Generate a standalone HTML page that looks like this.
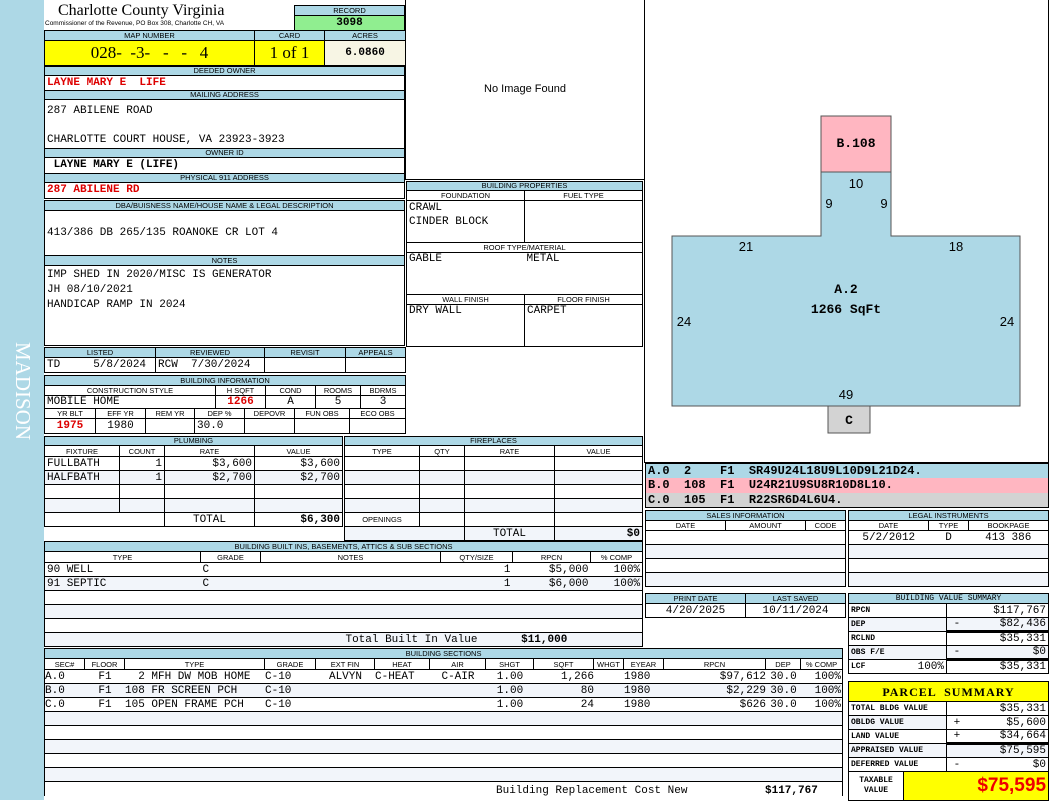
<!DOCTYPE html>
<html><head><meta charset="utf-8"><style>
*{margin:0;padding:0;box-sizing:border-box}
body{width:1050px;height:800px;position:relative;background:#fff;overflow:hidden;font-family:"Liberation Mono",monospace;font-size:11px;color:#000}
.a{position:absolute}
table{position:absolute;border-collapse:collapse;table-layout:fixed}
td{border:1px solid #000;padding:0 2px;white-space:nowrap;overflow:hidden;font-family:"Liberation Mono",monospace;font-size:11px;line-height:12px}
td.h{background:#add8e6;font-family:"Liberation Sans",sans-serif;font-size:7.5px;text-align:center;line-height:8px;padding:0}
td.s{font-family:"Liberation Sans",sans-serif;font-size:7.5px;text-align:center;line-height:9px;padding:0}
.r{text-align:right}.c{text-align:center}
.red{color:#d00;font-weight:bold}
.bold{font-weight:bold}
.alt td{background:#f2f5fa}
.sm td{font-size:8px;font-weight:bold;font-family:"Liberation Mono",monospace}
</style></head><body>
<div class="a" style="left:0;top:0;width:44px;height:800px;background:#add8e6"></div>
<div class="a" style="left:9px;top:342px;width:26px;height:120px;color:#fff;font-family:'Liberation Serif',serif;font-size:21px;writing-mode:vertical-rl;letter-spacing:0px">MADISON</div>

<div class="a" style="left:58px;top:2px;font-family:'Liberation Serif',serif;font-size:16px">Charlotte County Virginia</div>
<div class="a" style="left:45px;top:20px;font-family:'Liberation Sans',sans-serif;font-size:6.5px">Commissioner of the Revenue, PO Box 308, Charlotte CH, VA</div>

<table style="left:294px;top:5px;width:111px"><tr style="height:10px"><td class="h">RECORD</td></tr><tr style="height:15px"><td class="c bold" style="background:#90ee90">3098</td></tr></table>

<table style="left:44px;top:30px;width:361px"><col style="width:210px"><col style="width:70px"><col style="width:81px">
<tr style="height:10px"><td class="h">MAP NUMBER</td><td class="h">CARD</td><td class="h">ACRES</td></tr>
<tr style="height:25px"><td class="c" style="background:#ff0;font-family:'Liberation Serif',serif;font-size:17px;line-height:20px;white-space:pre">028-  -3-   -   -   4</td><td class="c" style="background:#ff0;font-family:'Liberation Serif',serif;font-size:17px;line-height:20px">1 of 1</td><td class="c bold" style="background:#f7f5e4">6.0860</td></tr></table>

<table style="left:44px;top:66px;width:361px">
<tr style="height:9px"><td class="h">DEEDED OWNER</td></tr>
<tr style="height:15px"><td class="red">LAYNE MARY E &nbsp;LIFE</td></tr>
<tr style="height:9px"><td class="h">MAILING ADDRESS</td></tr>
<tr style="height:46px"><td style="vertical-align:top;line-height:14.5px;padding-top:4px">287 ABILENE ROAD<br><br>CHARLOTTE COURT HOUSE, VA 23923-3923</td></tr>
<tr style="height:9px"><td class="h">OWNER ID</td></tr>
<tr style="height:16px"><td class="bold">&nbsp;LAYNE MARY E (LIFE)</td></tr>
<tr style="height:9px"><td class="h">PHYSICAL 911 ADDRESS</td></tr>
<tr style="height:16px"><td class="red">287 ABILENE RD</td></tr></table>

<table style="left:44px;top:200px;width:361px">
<tr style="height:10px"><td class="h">DBA/BUISNESS NAME/HOUSE NAME &amp; LEGAL DESCRIPTION</td></tr>
<tr style="height:45px"><td>413/386 DB 265/135 ROANOKE CR LOT 4</td></tr>
<tr style="height:10px"><td class="h">NOTES</td></tr>
<tr style="height:80px"><td style="vertical-align:top;line-height:15px;padding-top:2px">IMP SHED IN 2020/MISC IS GENERATOR<br>JH 08/10/2021<br>HANDICAP RAMP IN 2024</td></tr></table>

<table style="left:44px;top:347px;width:361px"><col style="width:111px"><col style="width:109px"><col style="width:81px"><col style="width:60px">
<tr style="height:10px"><td class="h">LISTED</td><td class="h">REVIEWED</td><td class="h">REVISIT</td><td class="h">APPEALS</td></tr>
<tr style="height:15px"><td>TD &nbsp; &nbsp; 5/8/2024</td><td>RCW &nbsp;7/30/2024</td><td></td><td></td></tr></table>

<table style="left:44px;top:375px;width:361px"><col style="width:51px"><col style="width:50px"><col style="width:49px"><col style="width:21px"><col style="width:29px"><col style="width:21px"><col style="width:29px"><col style="width:21px"><col style="width:34px"><col style="width:11px"><col style="width:45px">
<tr style="height:10px"><td class="h" colspan="11">BUILDING INFORMATION</td></tr>
<tr style="height:10px"><td class="s" colspan="4">CONSTRUCTION STYLE</td><td class="s" colspan="2">H SQFT</td><td class="s" colspan="2">COND</td><td class="s" colspan="2">ROOMS</td><td class="s">BDRMS</td></tr>
<tr style="height:13px"><td colspan="4">MOBILE HOME</td><td class="c red" colspan="2">1266</td><td class="c" colspan="2">A</td><td class="c" colspan="2">5</td><td class="c">3</td></tr>
<tr style="height:10px"><td class="s">YR BLT</td><td class="s">EFF YR</td><td class="s">REM YR</td><td class="s" colspan="2">DEP %</td><td class="s" colspan="2">DEPOVR</td><td class="s" colspan="2">FUN OBS</td><td class="s" colspan="2">ECO OBS</td></tr>
<tr style="height:15px"><td class="c red">1975</td><td class="c">1980</td><td></td><td colspan="2">30.0</td><td colspan="2"></td><td colspan="2"></td><td colspan="2"></td></tr></table>

<table style="left:44px;top:436px;width:298px"><col style="width:75px"><col style="width:45px"><col style="width:90px"><col style="width:88px">
<tr style="height:9px"><td class="h" colspan="4">PLUMBING</td></tr>
<tr style="height:11px"><td class="s">FIXTURE</td><td class="s">COUNT</td><td class="s">RATE</td><td class="s">VALUE</td></tr>
<tr style="height:14px"><td>FULLBATH</td><td class="r">1</td><td class="r">$3,600</td><td class="r">$3,600</td></tr>
<tr style="height:14px" class="alt"><td>HALFBATH</td><td class="r">1</td><td class="r">$2,700</td><td class="r">$2,700</td></tr>
<tr style="height:14px"><td></td><td></td><td></td><td></td></tr>
<tr style="height:14px" class="alt"><td></td><td></td><td></td><td></td></tr>
<tr style="height:14px"><td colspan="2"></td><td class="c">TOTAL</td><td class="r bold">$6,300</td></tr></table>

<table style="left:344px;top:436px;width:298px"><col style="width:75px"><col style="width:45px"><col style="width:90px"><col style="width:88px">
<tr style="height:9px"><td class="h" colspan="4">FIREPLACES</td></tr>
<tr style="height:11px"><td class="s">TYPE</td><td class="s">QTY</td><td class="s">RATE</td><td class="s">VALUE</td></tr>
<tr style="height:14px"><td></td><td></td><td></td><td></td></tr>
<tr style="height:14px" class="alt"><td></td><td></td><td></td><td></td></tr>
<tr style="height:14px"><td></td><td></td><td></td><td></td></tr>
<tr style="height:14px" class="alt"><td></td><td></td><td></td><td></td></tr>
<tr style="height:14px"><td class="s">OPENINGS</td><td></td><td></td><td></td></tr>
<tr style="height:14px" class="alt"><td colspan="2"></td><td class="c">TOTAL</td><td class="r bold">$0</td></tr></table>

<table style="left:44px;top:541px;width:598px"><col style="width:156px"><col style="width:60px"><col style="width:180px"><col style="width:72px"><col style="width:78px"><col style="width:52px">
<tr style="height:10px"><td class="h" colspan="6">BUILDING BUILT INS, BASEMENTS, ATTICS &amp; SUB SECTIONS</td></tr>
<tr style="height:11px"><td class="s">TYPE</td><td class="s">GRADE</td><td class="s">NOTES</td><td class="s">QTY/SIZE</td><td class="s">RPCN</td><td class="s">% COMP</td></tr>
<tr style="height:14px"><td style="border-right:none">90 WELL</td><td style="border-left:none;border-right:none">C</td><td style="border:none"></td><td class="r" style="border-left:none;border-right:none">1</td><td class="r" style="border:none">$5,000</td><td class="r" style="border-left:none">100%</td></tr>
<tr style="height:14px" class="alt"><td style="border-right:none">91 SEPTIC</td><td style="border-left:none;border-right:none">C</td><td style="border-left:none;border-right:none"></td><td class="r" style="border-left:none;border-right:none">1</td><td class="r" style="border-left:none;border-right:none">$6,000</td><td class="r" style="border-left:none">100%</td></tr>
<tr style="height:14px"><td colspan="6"></td></tr>
<tr style="height:14px" class="alt"><td colspan="6"></td></tr>
<tr style="height:14px"><td colspan="6"></td></tr>
<tr style="height:14px" class="alt"><td colspan="4" class="r" style="border-right:none">Total Built In Value&nbsp;&nbsp;&nbsp;&nbsp;&nbsp;</td><td colspan="2" class="bold" style="border-left:none">&nbsp;$11,000</td></tr></table>

<table style="left:44px;top:648px;width:798px"><col style="width:40px"><col style="width:40px"><col style="width:140px"><col style="width:51px"><col style="width:59px"><col style="width:55px"><col style="width:56px"><col style="width:48px"><col style="width:60px"><col style="width:30px"><col style="width:40px"><col style="width:102px"><col style="width:35px"><col style="width:42px">
<tr style="height:10px"><td class="h" colspan="14">BUILDING SECTIONS</td></tr>
<tr style="height:11px"><td class="s">SEC#</td><td class="s">FLOOR</td><td class="s">TYPE</td><td class="s">GRADE</td><td class="s">EXT FIN</td><td class="s">HEAT</td><td class="s">AIR</td><td class="s">SHGT</td><td class="s">SQFT</td><td class="s">WHGT</td><td class="s">EYEAR</td><td class="s">RPCN</td><td class="s">DEP</td><td class="s">% COMP</td></tr>
<tr style="height:14px" class="nb"><td colspan="14" style="padding:0;border-left:1px solid #000"><div style="display:flex;white-space:pre"><span style="width:40px">A.0</span><span style="width:40px;text-align:center">F1</span><span style="width:140px">  2 MFH DW MOB HOME</span><span style="width:51px">C-10</span><span style="width:59px;text-align:center">ALVYN</span><span style="width:55px">C-HEAT</span><span style="width:56px;text-align:center">C-AIR</span><span style="width:48px;text-align:center">1.00</span><span style="width:60px;text-align:right">1,266</span><span style="width:30px"></span><span style="width:40px">1980</span><span style="width:102px;text-align:right">$97,612</span><span style="width:35px;text-align:center">30.0</span><span style="width:40px;text-align:right">100%</span></div></td></tr>
<tr style="height:14px" class="alt"><td colspan="14" style="padding:0"><div style="display:flex;white-space:pre"><span style="width:40px">B.0</span><span style="width:40px;text-align:center">F1</span><span style="width:140px">108 FR SCREEN PCH</span><span style="width:51px">C-10</span><span style="width:59px"></span><span style="width:55px"></span><span style="width:56px"></span><span style="width:48px;text-align:center">1.00</span><span style="width:60px;text-align:right">80</span><span style="width:30px"></span><span style="width:40px">1980</span><span style="width:102px;text-align:right">$2,229</span><span style="width:35px;text-align:center">30.0</span><span style="width:40px;text-align:right">100%</span></div></td></tr>
<tr style="height:14px"><td colspan="14" style="padding:0"><div style="display:flex;white-space:pre"><span style="width:40px">C.0</span><span style="width:40px;text-align:center">F1</span><span style="width:140px">105 OPEN FRAME PCH</span><span style="width:51px">C-10</span><span style="width:59px"></span><span style="width:55px"></span><span style="width:56px"></span><span style="width:48px;text-align:center">1.00</span><span style="width:60px;text-align:right">24</span><span style="width:30px"></span><span style="width:40px">1980</span><span style="width:102px;text-align:right">$626</span><span style="width:35px;text-align:center">30.0</span><span style="width:40px;text-align:right">100%</span></div></td></tr>
<tr style="height:14px" class="alt"><td colspan="14"></td></tr>
<tr style="height:14px"><td colspan="14"></td></tr>
<tr style="height:14px" class="alt"><td colspan="14"></td></tr>
<tr style="height:14px"><td colspan="14"></td></tr>
<tr style="height:14px" class="alt"><td colspan="14"></td></tr>
<tr style="height:14px"><td colspan="14" style="border-bottom:none"></td></tr></table>
<div class="a" style="left:496px;top:785px">Building Replacement Cost New</div>
<div class="a bold" style="left:765px;top:785px">$117,767</div>

<div class="a" style="left:405px;top:0;width:240px;height:180px;border:1px solid #000;border-top:none"></div>
<div class="a" style="left:405px;top:83px;width:240px;text-align:center;font-family:'Liberation Sans',sans-serif;font-size:11px">No Image Found</div>

<table style="left:406px;top:181px;width:236px"><col style="width:118px"><col style="width:118px">
<tr style="height:9px"><td class="h" colspan="2">BUILDING PROPERTIES</td></tr>
<tr style="height:10px"><td class="s">FOUNDATION</td><td class="s">FUEL TYPE</td></tr>
<tr style="height:42px"><td style="vertical-align:top;line-height:14px">CRAWL<br>CINDER BLOCK</td><td></td></tr>
<tr style="height:10px"><td class="s" colspan="2">ROOF TYPE/MATERIAL</td></tr>
<tr style="height:42px"><td style="vertical-align:top;border-right:none">GABLE</td><td style="vertical-align:top;border-left:none">METAL</td></tr>
<tr style="height:10px"><td class="s">WALL FINISH</td><td class="s">FLOOR FINISH</td></tr>
<tr style="height:42px"><td style="vertical-align:top">DRY WALL</td><td style="vertical-align:top">CARPET</td></tr></table>

<div class="a" style="left:644px;top:0;width:405px;height:463px;border:1px solid #000;border-top:none"></div>
<svg class="a" style="left:0;top:0" width="1050" height="470">
<rect x="821" y="116" width="70" height="56" fill="#ffb6c1" stroke="#555"/>
<polygon points="821,172 891,172 891,236 1020,236 1020,406 672,406 672,236 821,236" fill="#add8e6" stroke="#555"/>
<rect x="828" y="406" width="42" height="27" fill="#d3d3d3" stroke="#555"/>
<g font-family="Liberation Mono" font-size="13" font-weight="bold" text-anchor="middle">
<text x="856" y="147">B.108</text><text x="846" y="293">A.2</text><text x="846" y="313">1266 SqFt</text><text x="849" y="424">C</text></g>
<g font-family="Liberation Sans" font-size="13" text-anchor="middle">
<text x="856" y="188">10</text><text x="829" y="208">9</text><text x="884" y="208">9</text><text x="746" y="251">21</text><text x="956" y="251">18</text><text x="684" y="326">24</text><text x="1007" y="326">24</text><text x="846" y="399">49</text></g>
</svg>
<div class="a bold" style="left:645px;top:463px;width:404px;height:15px;background:#add8e6;border:1px solid #000;border-bottom:none;font-family:'Liberation Mono';font-size:12px;line-height:14px;padding-left:2px;white-space:pre">A.0  2    F1  SR49U24L18U9L10D9L21D24.</div>
<div class="a bold" style="left:645px;top:478px;width:404px;height:15px;background:#ffb6c1;border-left:1px solid #000;border-right:1px solid #000;font-family:'Liberation Mono';font-size:12px;line-height:14px;padding-left:2px;white-space:pre">B.0  108  F1  U24R21U9SU8R10D8L10.</div>
<div class="a bold" style="left:645px;top:493px;width:404px;height:15px;background:#d3d3d3;border:1px solid #000;border-top:none;font-family:'Liberation Mono';font-size:12px;line-height:14px;padding-left:2px;white-space:pre">C.0  105  F1  R22SR6D4L6U4.</div>

<table style="left:645px;top:510px;width:200px"><col style="width:80px"><col style="width:80px"><col style="width:40px">
<tr style="height:10px"><td class="h" colspan="3">SALES INFORMATION</td></tr>
<tr style="height:10px"><td class="s">DATE</td><td class="s">AMOUNT</td><td class="s">CODE</td></tr>
<tr style="height:14px"><td colspan="3"></td></tr><tr style="height:14px" class="alt"><td colspan="3"></td></tr><tr style="height:14px"><td colspan="3"></td></tr><tr style="height:14px" class="alt"><td colspan="3"></td></tr></table>

<table style="left:848px;top:510px;width:200px"><col style="width:80px"><col style="width:40px"><col style="width:80px">
<tr style="height:10px"><td class="h" colspan="3">LEGAL INSTRUMENTS</td></tr>
<tr style="height:10px"><td class="s">DATE</td><td class="s">TYPE</td><td class="s">BOOKPAGE</td></tr>
<tr style="height:14px"><td class="c" style="border-right:none">5/2/2012</td><td class="c" style="border:none;border-bottom:1px solid #000">D</td><td class="c" style="border-left:none">413 386</td></tr>
<tr style="height:14px" class="alt"><td colspan="3"></td></tr><tr style="height:14px"><td colspan="3"></td></tr><tr style="height:14px" class="alt"><td colspan="3"></td></tr></table>

<table style="left:645px;top:593px;width:200px"><col style="width:100px"><col style="width:100px">
<tr style="height:10px"><td class="h">PRINT DATE</td><td class="h">LAST SAVED</td></tr>
<tr style="height:14px"><td class="c">4/20/2025</td><td class="c">10/11/2024</td></tr></table>

<table style="left:848px;top:593px;width:200px" class="sm"><col style="width:98px"><col style="width:102px">
<tr style="height:10px"><td class="h" colspan="2" style="font-weight:normal">BUILDING VALUE SUMMARY</td></tr>
<tr style="height:14px"><td>RPCN</td><td class="r" style="font-size:11px;font-weight:normal">$117,767</td></tr>
<tr style="height:14px" class="alt"><td>DEP</td><td class="r" style="font-size:11px;font-weight:normal;border-bottom:3px solid #000">-&nbsp;&nbsp;&nbsp;&nbsp;&nbsp;&nbsp;$82,436</td></tr>
<tr style="height:14px"><td>RCLND</td><td class="r" style="font-size:11px;font-weight:normal">$35,331</td></tr>
<tr style="height:14px" class="alt"><td>OBS F/E</td><td class="r" style="font-size:11px;font-weight:normal;border-bottom:3px solid #000">-&nbsp;&nbsp;&nbsp;&nbsp;&nbsp;&nbsp;&nbsp;&nbsp;&nbsp;&nbsp;&nbsp;$0</td></tr>
<tr style="height:14px"><td>LCF<span style="float:right;font-size:11px;font-weight:normal">100%</span></td><td class="r" style="font-size:11px;font-weight:normal">$35,331</td></tr></table>

<table style="left:848px;top:681px;width:200px" class="sm"><col style="width:55px"><col style="width:43px"><col style="width:102px">
<tr style="height:20px"><td colspan="3" class="c" style="background:#ff0;font-family:'Liberation Serif',serif;font-size:12px;font-weight:bold;letter-spacing:1px">PARCEL &nbsp;SUMMARY</td></tr>
<tr style="height:14px"><td colspan="2">TOTAL BLDG VALUE</td><td class="r" style="font-size:11px;font-weight:normal">$35,331</td></tr>
<tr style="height:14px" class="alt"><td colspan="2">OBLDG VALUE</td><td class="r" style="font-size:11px;font-weight:normal;background:#fff">+&nbsp;&nbsp;&nbsp;&nbsp;&nbsp;&nbsp;&nbsp;$5,600</td></tr>
<tr style="height:14px"><td colspan="2">LAND VALUE</td><td class="r" style="font-size:11px;font-weight:normal;border-bottom:3px solid #000">+&nbsp;&nbsp;&nbsp;&nbsp;&nbsp;&nbsp;$34,664</td></tr>
<tr style="height:14px" class="alt"><td colspan="2">APPRAISED VALUE</td><td class="r" style="font-size:11px;font-weight:normal">$75,595</td></tr>
<tr style="height:14px"><td colspan="2">DEFERRED VALUE</td><td class="r" style="font-size:11px;font-weight:normal">-&nbsp;&nbsp;&nbsp;&nbsp;&nbsp;&nbsp;&nbsp;&nbsp;&nbsp;&nbsp;&nbsp;$0</td></tr>
<tr style="height:29px"><td class="c" style="line-height:10px">TAXABLE<br>VALUE</td><td colspan="2" class="r" style="background:#ff0;color:#e00;font-family:'Liberation Sans',sans-serif;font-size:19px;font-weight:bold;line-height:20px">$75,595</td></tr></table>
</body></html>
